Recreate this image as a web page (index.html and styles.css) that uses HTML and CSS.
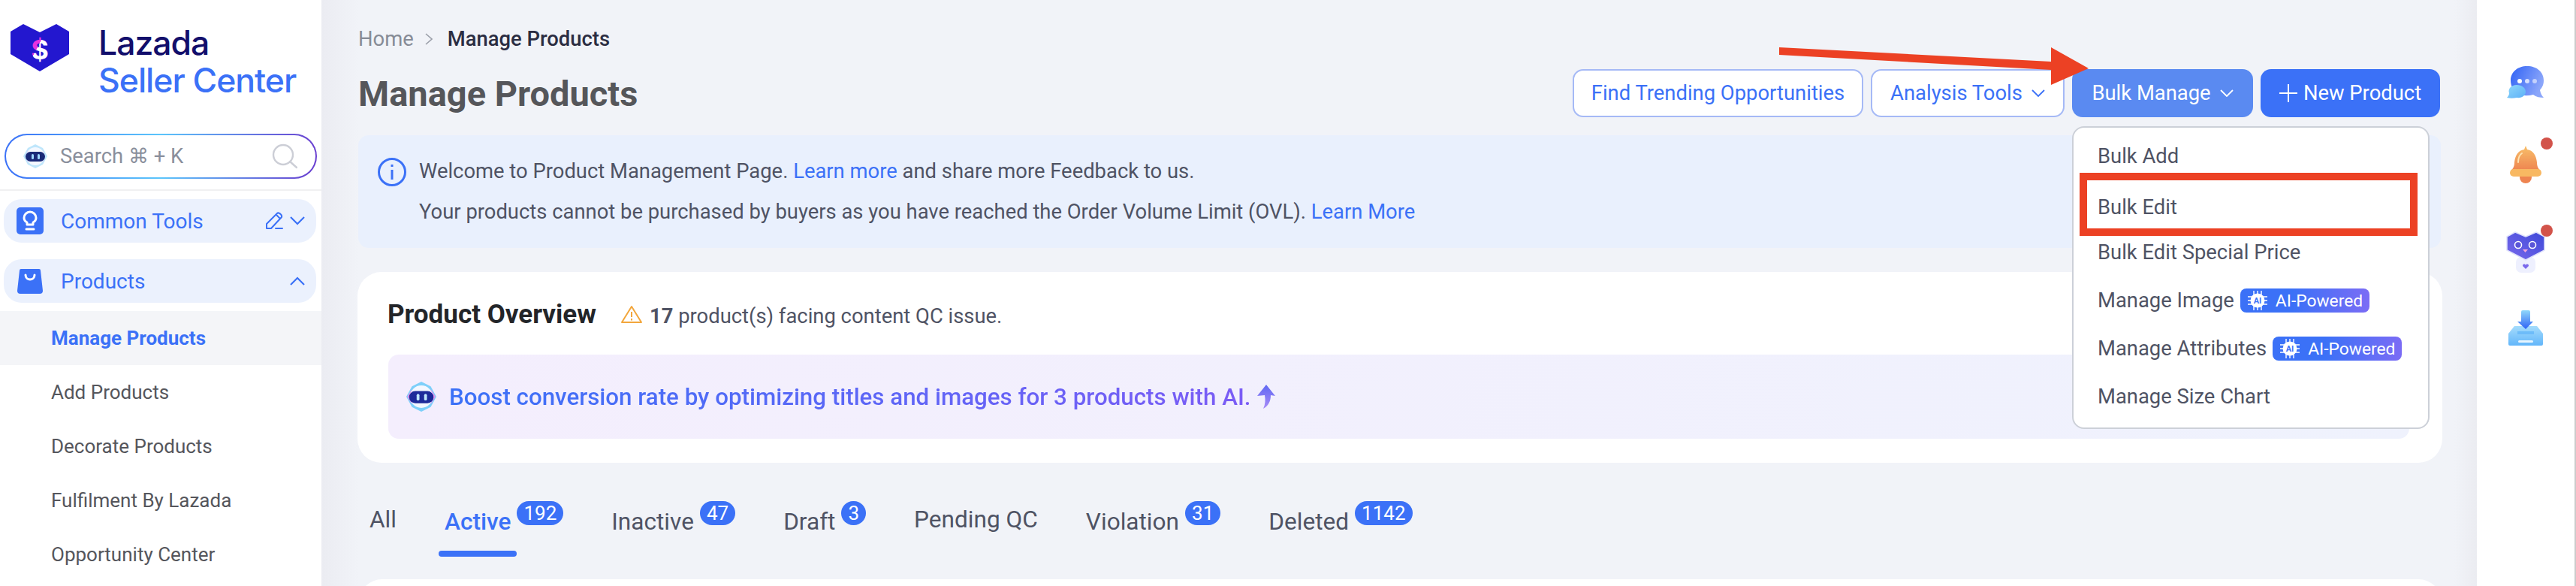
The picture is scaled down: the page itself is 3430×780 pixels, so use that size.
FILE: index.html
```html
<!DOCTYPE html>
<html lang="en">
<head>
    <title>Manage Products</title>
    <meta charset="utf-8">
    <link rel="stylesheet" href="styles.css">
</head>
<body>
<div class="page">

    <!-- sidebar -->
    <aside class="sidebar">
        <div class="logo">
            <svg class="logo-mark" width="78" height="63" viewBox="0 0 78 63">
                <defs>
                    <linearGradient id="dollarFill" x1="0" y1="0" x2="1" y2="1">
                        <stop offset="0.4" stop-color="#e832e0"/>
                        <stop offset="0.4" stop-color="#ffffff"/>
                    </linearGradient>
                </defs>
                <path d="M17 0 L39 11 L61 0 L78 10 L78 40 L39 63 L0 40 L0 10 Z" fill="#2317cf"/>
                <text x="39" y="47" text-anchor="middle" font-family="Inter, sans-serif" font-weight="700" font-size="36" fill="url(#dollarFill)">$</text>
            </svg>
            <div class="logo-text">
                <div class="logo-lazada">Lazada</div>
                <div class="logo-seller">Seller Center</div>
            </div>
        </div>

        <div class="search">
            <svg class="search-bot" width="32" height="32" viewBox="0 0 32 32">
                <path d="M16 0 L26 5 L32 16 L26 27 L16 32 L6 27 L0 16 L6 5 Z" fill="#bfe6fb"/>
                <path d="M3 16 L6 8 L6 24 Z" fill="#e3b6f3"/>
                <path d="M29 16 L26 8 L26 24 Z" fill="#e3b6f3"/>
                <circle cx="16" cy="16" r="12" fill="#f4f8ff"/>
                <rect x="3" y="10" width="26" height="13" rx="6.5" fill="#1a2a78"/>
                <rect x="11" y="13" width="3" height="7" rx="1.5" fill="#9fd8ff"/>
                <rect x="19" y="13" width="3" height="7" rx="1.5" fill="#9fd8ff"/>
            </svg>
            <span class="search-label">Search ⌘ + K</span>
            <svg class="search-icon" width="34" height="34" viewBox="0 0 34 34" fill="none" stroke="#ccced6" stroke-width="2.4">
                <circle cx="15" cy="15" r="13"/>
                <path d="M24 24 L33 32" stroke-linecap="round"/>
            </svg>
        </div>

        <div class="side-divider"></div>

        <div class="nav-pill">
            <span class="nav-square">
                <svg width="24" height="28" viewBox="0 0 24 28" fill="none" stroke="#fff" stroke-width="3">
                    <path d="M8 19 V16 C6 15 4 13 4 10 A8 8 0 0 1 20 10 C20 13 18 15 16 16 V19 Z" stroke-linejoin="round"/>
                    <path d="M7 25 H17" stroke-linecap="round"/>
                </svg>
            </span>
            <span class="nav-label">Common Tools</span>
            <svg class="nav-edit" width="24" height="24" viewBox="0 0 24 24" fill="none" stroke="#3b71f7" stroke-width="2">
                <path d="M2 22 L2 16 L16 2 C18 0 23 4 22 7 L8 22 Z" stroke-linejoin="round"/>
                <path d="M14 22 H23" stroke-linecap="round"/>
                <path d="M15 4 L20 9"/>
            </svg>
            <svg class="nav-chevron" width="20" height="12" viewBox="0 0 20 12" fill="none" stroke="#3b71f7" stroke-width="2.2">
                <path d="M1 1 L10 10 L19 1"/>
            </svg>
        </div>

        <div class="nav-pill nav-pill-next">
            <svg class="nav-bag" width="34" height="34" viewBox="0 0 34 34">
                <path d="M5 1 H29 Q31 1 31 3 L34 30 Q34 34 30 34 H4 Q0 34 0 30 L3 3 Q3 1 5 1 Z" fill="#3b71f7"/>
                <path d="M11 9 C11 17 23 17 23 9" fill="none" stroke="#fff" stroke-width="3" stroke-linecap="round"/>
            </svg>
            <span class="nav-label">Products</span>
            <svg class="nav-chevron" width="20" height="12" viewBox="0 0 20 12" fill="none" stroke="#3b71f7" stroke-width="2.2">
                <path d="M1 11 L10 2 L19 11"/>
            </svg>
        </div>

        <ul class="subnav">
            <li class="subnav-item subnav-active">Manage Products</li>
            <li class="subnav-item">Add Products</li>
            <li class="subnav-item">Decorate Products</li>
            <li class="subnav-item">Fulfilment By Lazada</li>
            <li class="subnav-item">Opportunity Center</li>
        </ul>
    </aside>

    <!-- main content -->
    <main class="main">
        <div class="breadcrumb">
            <span class="crumb-home">Home</span>
            <svg width="10" height="16" viewBox="0 0 10 16" fill="none" stroke="#9a9ea8" stroke-width="1.6"><path d="M1 1 L9 8 L1 15"/></svg>
            <span class="crumb-current">Manage Products</span>
        </div>

        <div class="title-row">
            <h1 class="page-title">Manage Products</h1>
            <div class="actions">
                <button class="btn btn-outline btn-trending">Find Trending Opportunities</button>
                <button class="btn btn-outline btn-analysis">Analysis Tools
                    <svg width="18" height="10" viewBox="0 0 18 10" fill="none" stroke="#3b71f7" stroke-width="1.8"><path d="M1 1 L9 9 L17 1"/></svg>
                </button>
                <div class="bulk-wrap">
                    <button class="btn btn-bulk">Bulk Manage
                        <svg width="18" height="10" viewBox="0 0 18 10" fill="none" stroke="#fff" stroke-width="1.8"><path d="M1 1 L9 9 L17 1"/></svg>
                    </button>
                    <div class="dropdown">
                        <div class="dropdown-item">Bulk Add</div>
                        <div class="dropdown-item dropdown-item-edit">Bulk Edit</div>
                        <div class="dropdown-item">Bulk Edit Special Price</div>
                        <div class="dropdown-item">Manage Image
                            <span class="ai-badge">
                                <svg width="28" height="28" viewBox="0 0 28 28"><g stroke="#fff" stroke-width="1.4"><path d="M1 9 H27 M1 14 H27 M1 19 H27 M9 1 V27 M14 1 V27 M19 1 V27"/></g><circle cx="14" cy="14" r="9.5" fill="#fff"/><text x="14" y="18" text-anchor="middle" font-family="Roboto, sans-serif" font-size="11" font-weight="700" fill="#3b71f7">AI</text></svg>
                                AI-Powered
                            </span>
                        </div>
                        <div class="dropdown-item">Manage Attributes
                            <span class="ai-badge">
                                <svg width="28" height="28" viewBox="0 0 28 28"><g stroke="#fff" stroke-width="1.4"><path d="M1 9 H27 M1 14 H27 M1 19 H27 M9 1 V27 M14 1 V27 M19 1 V27"/></g><circle cx="14" cy="14" r="9.5" fill="#fff"/><text x="14" y="18" text-anchor="middle" font-family="Roboto, sans-serif" font-size="11" font-weight="700" fill="#3b71f7">AI</text></svg>
                                AI-Powered
                            </span>
                        </div>
                        <div class="dropdown-item">Manage Size Chart</div>
                        <div class="red-box"></div>
                    </div>
                </div>
                <button class="btn btn-primary">
                    <svg width="24" height="24" viewBox="0 0 24 24" stroke="#fff" stroke-width="2"><path d="M12 0 V24 M0 12 H24"/></svg>
                    New Product
                </button>
            </div>
        </div>

        <div class="notice">
            <svg class="notice-icon" width="38" height="40" viewBox="0 0 38 40" fill="none" stroke="#3b71f7" stroke-width="3">
                <circle cx="19" cy="20" r="17.5"/>
                <path d="M19 17 V30" stroke-width="3"/>
                <path d="M19 10 V13" stroke-width="3"/>
            </svg>
            <div class="notice-text">
                <p class="notice-line">Welcome to Product Management Page. <a class="link">Learn more</a> and share more Feedback to us.</p>
                <p class="notice-line">Your products cannot be purchased by buyers as you have reached the Order Volume Limit (OVL). <a class="link">Learn More</a></p>
            </div>
        </div>

        <section class="overview">
            <div class="overview-head">
                <h2 class="overview-title">Product Overview</h2>
                <svg width="28" height="24" viewBox="0 0 28 24" fill="none" stroke="#f2a63c" stroke-width="2">
                    <path d="M14 2 L27 23 H1 Z" stroke-linejoin="round"/>
                    <path d="M14 9 V16 M14 18 V20.5"/>
                </svg>
                <span class="overview-note"><b>17</b> product(s) facing content QC issue.</span>
            </div>
            <div class="boost">
                <svg width="40" height="40" viewBox="0 0 32 32">
                    <path d="M16 0 L26 5 L32 16 L26 27 L16 32 L6 27 L0 16 L6 5 Z" fill="#7ed0fa"/>
                    <path d="M1 16 L6 8 L6 24 Z" fill="#e093ee"/>
                    <path d="M31 16 L26 8 L26 24 Z" fill="#e093ee"/>
                    <circle cx="16" cy="16" r="12" fill="#f4f8ff"/>
                    <rect x="3" y="10" width="26" height="13" rx="6.5" fill="#1d2a9a"/>
                    <rect x="11" y="13" width="3" height="7" rx="1.5" fill="#bfe6fb"/>
                    <rect x="19" y="13" width="3" height="7" rx="1.5" fill="#bfe6fb"/>
                </svg>
                <span class="boost-text">Boost conversion rate by optimizing titles and images for 3 products with AI.</span>
                <svg width="24" height="32" viewBox="0 0 24 32">
                    <defs>
                        <linearGradient id="boostArrow" x1="0" y1="0" x2="0" y2="1">
                            <stop offset="0" stop-color="#5f68f3"/>
                            <stop offset="1" stop-color="#a98cf7"/>
                        </linearGradient>
                    </defs>
                    <path d="M12 0 L24 15 L18 14 C18 22 15 28 8 32 C11 26 11 20 10 14 L0 15 Z" fill="url(#boostArrow)"/>
                </svg>
            </div>
        </section>

        <nav class="tabs">
            <div class="tab tab-plain"><span class="tab-label">All</span></div>
            <div class="tab tab-active"><span class="tab-label">Active</span><span class="tab-count">192</span></div>
            <div class="tab"><span class="tab-label">Inactive</span><span class="tab-count">47</span></div>
            <div class="tab"><span class="tab-label">Draft</span><span class="tab-count">3</span></div>
            <div class="tab tab-plain"><span class="tab-label">Pending QC</span></div>
            <div class="tab"><span class="tab-label">Violation</span><span class="tab-count">31</span></div>
            <div class="tab"><span class="tab-label">Deleted</span><span class="tab-count">1142</span></div>
        </nav>

        <div class="table-card"></div>

        <!-- annotation arrow drawn over the screenshot -->
        <svg class="annot-arrow" width="412" height="50" viewBox="0 0 412 50">
            <path d="M0 0 L362 19 L362 0 L412 28 L362 50 L362 30 L0 10 Z" fill="#ec4124"/>
        </svg>
    </main>

    <!-- right rail -->
    <aside class="rail">
        <svg class="rail-icon" width="50" height="44" viewBox="0 0 50 44">
            <defs>
                <linearGradient id="chatBig" x1="0" y1="0" x2="1" y2="0.4">
                    <stop offset="0" stop-color="#2f62f5"/>
                    <stop offset="1" stop-color="#8ba6fa"/>
                </linearGradient>
                <linearGradient id="chatSmall" x1="0" y1="0" x2="1" y2="1">
                    <stop offset="0" stop-color="#8fd8fb"/>
                    <stop offset="1" stop-color="#5cb0f7"/>
                </linearGradient>
            </defs>
            <path d="M27 0 C40 0 49 8 49 19 C49 26 46 29 44 32 C45 37 47 40 49 42 C44 42 39 41 35 38 C28 40 20 40 14 36 C8 32 5 26 5 19 C5 8 14 0 27 0 Z" fill="url(#chatBig)"/>
            <circle cx="17" cy="20" r="3" fill="#fff"/>
            <circle cx="27" cy="20" r="3" fill="#d5defd"/>
            <circle cx="37" cy="20" r="3" fill="#c4d1fc"/>
            <path d="M13 25 C20 25 25 29 25 34 C25 39 20 43 13 42 C9 43 4 43 0 42 C2 40 3 38 3 36 C1 30 6 25 13 25 Z" fill="url(#chatSmall)"/>
        </svg>
        <div class="rail-slot">
            <svg class="rail-icon" width="42" height="50" viewBox="0 0 42 50">
                <defs>
                    <linearGradient id="bellBody" x1="0" y1="0" x2="0" y2="1">
                        <stop offset="0" stop-color="#f8c06a"/>
                        <stop offset="1" stop-color="#ee8450"/>
                    </linearGradient>
                </defs>
                <circle cx="21" cy="42" r="8" fill="#ee8450"/>
                <path d="M21 0 L23 5 C31 6 35 13 36 22 C36 28 38 31 41 33 L1 33 C4 31 6 28 6 22 C7 13 11 6 19 5 Z" fill="url(#bellBody)"/>
                <rect x="0" y="31" width="42" height="10" rx="5" fill="#f8b862"/>
                <path d="M11 22 C11 16 13 12 16 10" stroke="#fde4b4" stroke-width="2" fill="none" stroke-linecap="round"/>
            </svg>
            <span class="rail-dot rail-dot-bell"></span>
        </div>
        <div class="rail-slot">
            <svg class="rail-icon" width="52" height="55" viewBox="0 0 52 55">
                <defs>
                    <linearGradient id="botHead" x1="1" y1="0" x2="0" y2="1">
                        <stop offset="0" stop-color="#3d49d8"/>
                        <stop offset="1" stop-color="#7a69ec"/>
                    </linearGradient>
                </defs>
                <rect x="13" y="34" width="26" height="21" rx="7" fill="#eef0fe"/>
                <path d="M12 1 L26 7 L40 1 L51 7 L51 25 L26 38 L1 25 L1 7 Z" fill="url(#botHead)" stroke="#dfe2fb" stroke-width="1.5" stroke-linejoin="round"/>
                <circle cx="16" cy="18" r="4.5" fill="#5a55d8" stroke="#fff" stroke-width="1.6"/>
                <circle cx="35" cy="18" r="4.5" fill="#5a55d8" stroke="#fff" stroke-width="1.6"/>
                <path d="M22 24 H29 L25.5 28 Z" fill="#f3a6da"/>
                <path d="M26 50 L22 46 C22 43 25 43 26 45 C27 43 30 43 30 46 Z" fill="#7a69ec"/>
            </svg>
            <span class="rail-dot rail-dot-bot"></span>
        </div>
        <svg class="rail-icon" width="46" height="47" viewBox="0 0 46 47">
            <defs>
                <linearGradient id="trayFill" x1="0" y1="0" x2="0" y2="1">
                    <stop offset="0" stop-color="#a5dcfc"/>
                    <stop offset="1" stop-color="#62b6fa"/>
                </linearGradient>
                <linearGradient id="downArrow" x1="0" y1="0" x2="0" y2="1">
                    <stop offset="0" stop-color="#8fd8fb"/>
                    <stop offset="1" stop-color="#2f62f5"/>
                </linearGradient>
            </defs>
            <path d="M8 21 H38 L46 31 V45 Q46 47 44 47 H2 Q0 47 0 45 V31 Z" fill="url(#trayFill)"/>
            <path d="M12 28 H34 V32 H12 Z" fill="#6dbcf9"/>
            <path d="M17 2 Q17 0 19 0 H27 Q29 0 29 2 V15 H33 L23 25 L12 15 H17 Z" fill="url(#downArrow)"/>
            <rect x="13" y="40" width="20" height="3" rx="1.5" fill="#e6f5ff"/>
        </svg>
    </aside>
</div>
</body>
</html>
```

FILE: styles.css
```css
* {
    box-sizing: border-box;
}

body {
    margin: 0;
    background-color: #f1f3f8;
    font-family: Roboto, sans-serif;
    overflow: hidden;
}

.page {
    display: flex;
    width: 3430px;
    height: 780px;
    overflow: hidden;
}

/* sidebar */
.sidebar {
    width: 428px;
    flex-shrink: 0;
    background-color: #ffffff;
}

.logo {
    height: 178px;
    padding: 32px 0 0 14px;
    display: flex;
    gap: 39px;
}

.logo-text {
    font-family: Inter, sans-serif;
    font-weight: 500;
    font-size: 44.5px;
    line-height: 50px;
    letter-spacing: -1px;
}

.logo-lazada {
    color: #120e6b;
}

.logo-seller {
    color: #3b71f7;
}

.search {
    height: 60px;
    margin: 0 6px;
    padding: 0 24px 0 23px;
    display: flex;
    align-items: center;
    border: 2px solid transparent;
    border-radius: 30px;
    background: linear-gradient(#fff, #fff) padding-box,
        linear-gradient(90deg, #3b71f7, #5bc5fb 50%, #6a3fd0) border-box;
}

.search-label {
    margin-left: 17px;
    flex: 1;
    font-size: 27.4px;
    color: #8a8f9c;
}

.side-divider {
    height: 2px;
    margin-top: 14px;
    background-color: #f0f0f1;
}

.nav-pill {
    height: 58px;
    margin: 11px 7px 0 5px;
    padding: 0 15px 0 17px;
    display: flex;
    align-items: center;
    border-radius: 24px;
    background-color: #ebf1fd;
}

.nav-pill-next {
    margin-top: 22px;
}

.nav-square {
    width: 36px;
    height: 36px;
    display: flex;
    align-items: center;
    justify-content: center;
    border-radius: 5px;
    background-color: #3b71f7;
}

.nav-bag {
    margin: 0 1px;
}

.nav-label {
    margin-left: 23px;
    flex: 1;
    font-size: 28px;
    color: #3b71f7;
}

.nav-chevron {
    margin-left: 9px;
}

.subnav {
    margin: 11px 0 0;
    padding: 0;
    list-style: none;
}

.subnav-item {
    height: 72px;
    padding-left: 68px;
    display: flex;
    align-items: center;
    font-size: 26px;
    color: #55565c;
}

.subnav-active {
    background-color: #f4f5f8;
    color: #3b71f7;
    font-weight: 700;
}

/* main */
.main {
    flex: 1;
    position: relative;
    padding: 37px 48px 0 49px;
    background: linear-gradient(90deg, #ebecf2, #f1f3f8 50px, #f1f3f8 calc(100% - 30px), #ebecf1);
}

.breadcrumb {
    height: 30px;
    display: flex;
    align-items: center;
    gap: 15px;
    font-size: 27.4px;
}

.crumb-home {
    color: #868b96;
}

.crumb-current {
    margin-left: 5px;
    color: #2b2d42;
    font-weight: 500;
}

.title-row {
    height: 64px;
    margin-top: 25px;
    display: flex;
    align-items: center;
    justify-content: space-between;
}

.page-title {
    margin: 0;
    font-size: 47px;
    font-weight: 700;
    color: #55565a;
}

.actions {
    display: flex;
    gap: 10px;
    margin-right: 1px;
}

.btn {
    height: 64px;
    padding: 0;
    display: flex;
    align-items: center;
    justify-content: center;
    gap: 12px;
    border: none;
    border-radius: 14px;
    font-family: Roboto, sans-serif;
    font-size: 27.4px;
}

.btn-outline {
    border: 2px solid #a5b9f6;
    background-color: #ffffff;
    color: #3b71f7;
}

.btn-trending {
    width: 387px;
}

.btn-analysis {
    width: 258px;
}

.btn-bulk {
    width: 241px;
    background-color: #5a8af1;
    color: #ffffff;
}

.btn-primary {
    width: 239px;
    gap: 8px;
    background-color: #3b71f7;
    color: #ffffff;
}

.bulk-wrap {
    position: relative;
}

.dropdown {
    position: absolute;
    top: 76px;
    left: 0;
    z-index: 5;
    width: 476px;
    height: 403px;
    padding: 6px 0 0 32px;
    border: 2px solid #ccd0d8;
    border-radius: 16px;
    background-color: #ffffff;
}

.dropdown-item {
    height: 64px;
    display: flex;
    align-items: center;
    gap: 8px;
    font-size: 27.4px;
    color: #4f5364;
}

.dropdown-item-edit {
    padding-top: 8px;
}

.ai-badge {
    height: 32px;
    padding: 0 9px 0 9px;
    display: inline-flex;
    align-items: center;
    gap: 10px;
    border-radius: 8px;
    background: linear-gradient(90deg, #3b71f7 40%, #7b6cf5);
    font-size: 22.8px;
    color: #ffffff;
}

.red-box {
    position: absolute;
    top: 60px;
    left: 8px;
    width: 450px;
    height: 84px;
    border: 10px solid #ec4124;
}

.annot-arrow {
    position: absolute;
    top: 63px;
    left: 1941px;
    z-index: 6;
}

.notice {
    height: 150px;
    margin-top: 24px;
    padding: 30px 0 0 26px;
    display: flex;
    gap: 17px;
    border-radius: 14px;
    background-color: #e9f0fd;
}

.notice-icon {
    margin-top: -1px;
}

.notice-text {
    font-size: 27.4px;
    color: #4f5364;
}

.notice-line {
    height: 36px;
    margin: 0 0 18px;
    line-height: 36px;
}

.link {
    color: #3b71f7;
}

.overview {
    height: 254px;
    margin: 32px -2px 0 -1px;
    padding: 38px 44px 0 40px;
    border-radius: 32px;
    background-color: #ffffff;
}

.overview-head {
    height: 36px;
    display: flex;
    align-items: center;
}

.overview-title {
    margin: 0 33px 0 0;
    font-size: 35px;
    font-weight: 700;
    color: #232529;
}

.overview-note {
    margin: 6px 0 0 10px;
    font-size: 27.4px;
    color: #4f5364;
}

.overview-note b {
    font-weight: 700;
}

.boost {
    height: 112px;
    margin: 36px 0 0 1px;
    padding-left: 24px;
    display: flex;
    align-items: center;
    gap: 17px;
    border-radius: 14px;
    background: linear-gradient(90deg, #f4eefd, #eff2fd);
}

.boost-text {
    margin-right: -8px;
    font-size: 31.3px;
    font-weight: 500;
    background: linear-gradient(90deg, #3b71f7, #7b5cf5);
    -webkit-background-clip: text;
    background-clip: text;
    color: transparent;
}

.tabs {
    height: 74px;
    margin-top: 51px;
    padding-left: 15px;
    display: flex;
    gap: 64px;
}

.tab {
    display: flex;
    align-items: flex-start;
    gap: 8px;
    font-size: 31.6px;
    color: #4f5364;
}

.tab-label {
    position: relative;
    margin-top: 10px;
    line-height: 36px;
}

.tab-plain .tab-label {
    margin-top: 7px;
}

.tab-active .tab-label {
    color: #3b71f7;
    font-weight: 500;
}

.tab-active .tab-label::after {
    content: "";
    position: absolute;
    left: -8px;
    right: -8px;
    top: 56px;
    height: 8px;
    border-radius: 4px;
    background-color: #3b71f7;
}

.tab-count {
    min-width: 32px;
    height: 32px;
    padding: 0 9px;
    border-radius: 16px;
    background-color: #3b71f7;
    color: #ffffff;
    font-size: 26px;
    line-height: 32px;
    text-align: center;
}

.table-card {
    height: 100px;
    margin: 30px -2px 0 0;
    border-radius: 32px;
    background-color: #ffffff;
}

/* right rail */
.rail {
    width: 132px;
    flex-shrink: 0;
    padding: 88px 0 0 40px;
    display: flex;
    flex-direction: column;
    background-color: #ffffff;
    border-right: 2px solid #cccccc;
}

.rail-slot {
    position: relative;
}

.rail-icon {
    display: block;
}

.rail-slot:nth-child(2) {
    margin: 62px 0 0 4px;
}

.rail-slot:nth-child(3) {
    margin: 64px 0 0 -1px;
}

.rail > svg:last-child {
    margin: 50px 0 0 2px;
}

.rail-dot {
    position: absolute;
    width: 16px;
    height: 16px;
    border-radius: 50%;
    background-color: #d2534a;
}

.rail-dot-bell {
    top: -11px;
    left: 41px;
}

.rail-dot-bot {
    top: -9px;
    left: 46px;
}
```
